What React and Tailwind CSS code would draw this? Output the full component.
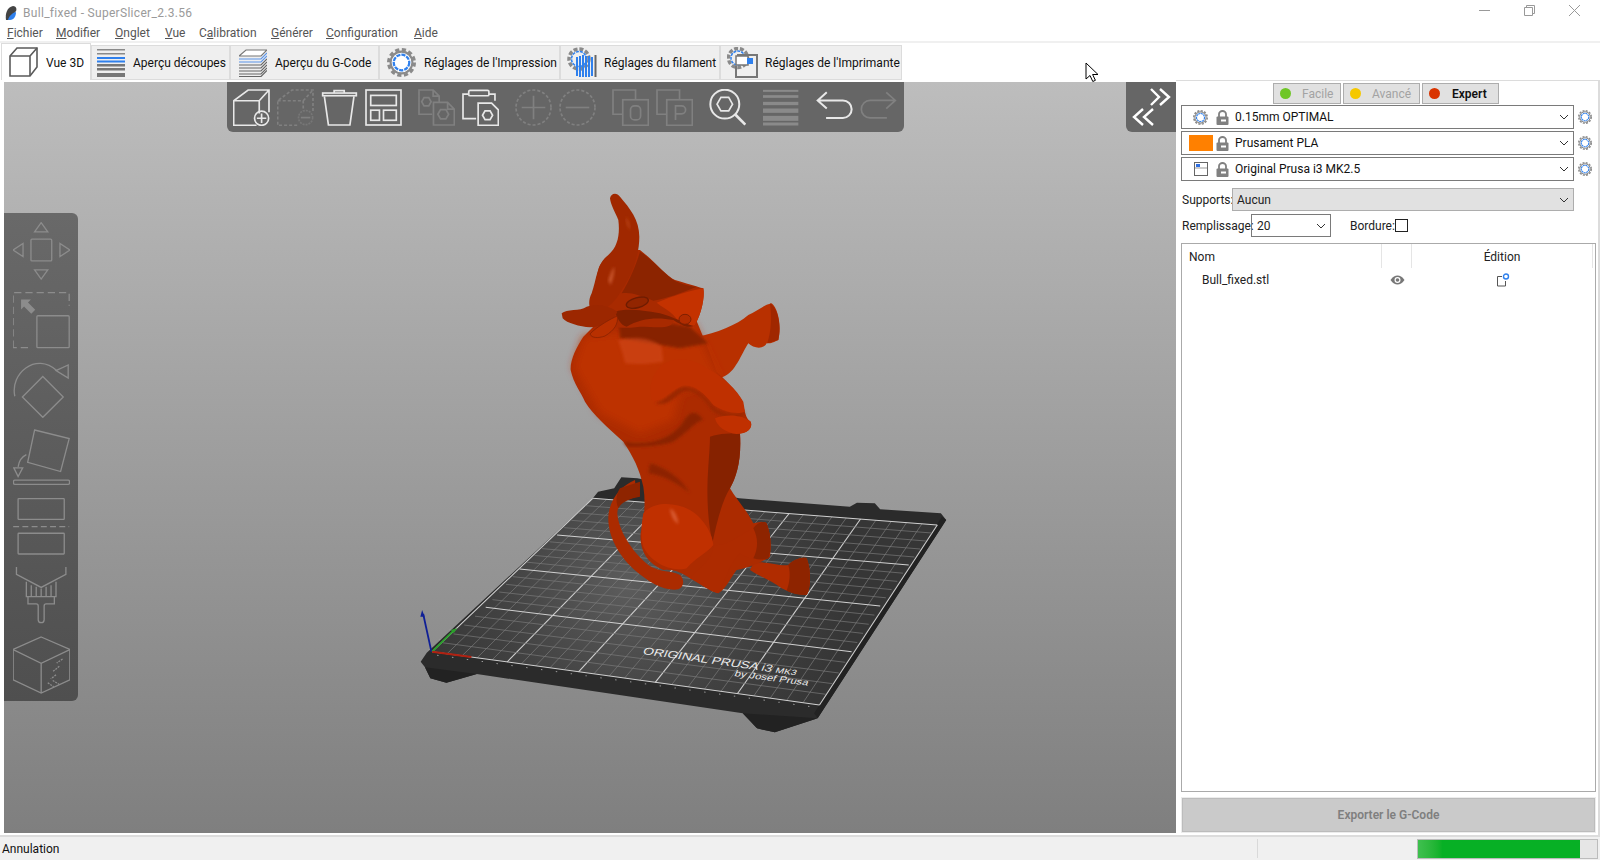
import React from "react";

const tabs = [
  { label: "Vue 3D", w: "w-[90px] h-[37px] bg-white border-b-0", pad: "pl-[7px]", gap: "gap-[8px]", icon: "cube", iw: "w-[29px]" },
  { label: "Aperçu découpes", w: "w-[139px] h-[35px] bg-[#efefef]", pad: "pl-[5px]", gap: "gap-[8px]", icon: "slices", iw: "w-[28px]" },
  { label: "Aperçu du G-Code", w: "w-[149px] h-[35px] bg-[#efefef]", pad: "pl-[8px]", gap: "gap-[8px]", icon: "gcode", iw: "w-[28px]" },
  { label: "Réglages de l'Impression", w: "w-[181px] h-[35px] bg-[#efefef]", pad: "pl-[7px]", gap: "gap-[8px]", icon: "gear", iw: "w-[29px]" },
  { label: "Réglages du filament", w: "w-[160px] h-[35px] bg-[#efefef]", pad: "pl-[6px]", gap: "gap-[7px]", icon: "filament", iw: "w-[30px]" },
  { label: "Réglages de l'Imprimante", w: "w-[182px] h-[35px] bg-[#efefef]", pad: "pl-[6px]", gap: "gap-[7px]", icon: "printer", iw: "w-[31px]" },
];

const menus = [
  ["", "F", "ichier", "w-[49px]"],
  ["", "M", "odifier", "w-[59px]"],
  ["", "O", "nglet", "w-[50px]"],
  ["", "V", "ue", "w-[34px]"],
  ["C", "a", "libration", "w-[72px]"],
  ["", "G", "énérer", "w-[55px]"],
  ["", "C", "onfiguration", "w-[88px]"],
  ["", "A", "ide", "w-[40px]"],
];

function Cog({ size = 16 }) {
  return (
    <svg width={size} height={size} viewBox="0 0 28 28" fill="none">
      <circle cx="14" cy="14" r="12.5" stroke="#8a8a8a" strokeWidth="3" strokeDasharray="4 2.54" />
      <circle cx="14" cy="14" r="10.5" fill="#fff" stroke="#8a8a8a" strokeWidth="2" />
      <circle cx="14" cy="14" r="7.5" stroke="#2f80ed" strokeWidth="2.2" strokeDasharray="4 1" />
    </svg>
  );
}

function Lock() {
  return (
    <svg width="13" height="15" viewBox="0 0 13 15">
      <path d="M3 7V4a3.5 3 0 0 1 7 0v3" fill="none" stroke="#808080" strokeWidth="1.8" />
      <rect x="0.5" y="6.5" width="12" height="8.5" rx="1" fill="#808080" />
      <rect x="5" y="9.5" width="5" height="2" fill="#fff" />
    </svg>
  );
}

function Chevron() {
  return (
    <svg width="10" height="6" viewBox="0 0 10 6" fill="none" className="absolute right-[4px] top-1/2 -translate-y-1/2">
      <path d="M1 1l4 4 4-4" stroke="#333" strokeWidth="1" />
    </svg>
  );
}

function TabIcon({ name }) {
  if (name === "cube")
    return (
      <svg width="29" height="30" viewBox="0 0 29 30" fill="none" stroke="#5a5a5a" strokeWidth="1.6">
        <path d="M1 9l7-8h20v19l-7 9H1z" />
        <path d="M1 9h20v20M21 9l7-8" />
      </svg>
    );
  if (name === "slices")
    return (
      <svg width="28" height="28" viewBox="0 0 28 28">
        <rect y="0" width="28" height="1.5" fill="#8a8a8a" />
        <rect y="4" width="28" height="1.5" fill="#8a8a8a" />
        <rect y="8" width="28" height="2" fill="#2f80ed" />
        <rect y="11.5" width="28" height="2" fill="#2f80ed" />
        <rect y="15" width="28" height="2.5" fill="#777" />
        <rect y="19" width="28" height="2.5" fill="#777" />
        <rect y="24" width="28" height="4" fill="#777" />
      </svg>
    );
  if (name === "gcode")
    return (
      <svg width="28" height="28" viewBox="0 0 28 28" fill="none" strokeWidth="1.2">
        <path d="M0 7l7-6h21l-6 6z" stroke="#777" fill="#fff" />
        <path d="M0 10h22l6-6M0 13h22l6-6" stroke="#5b94e8" />
        <path d="M0 16h22l6-6M0 19h22l6-6M0 22h22l6-6M0 25h22l6-6M0 27.5h22l6-6" stroke="#666" />
      </svg>
    );
  if (name === "gear") return <Cog size={29} />;
  if (name === "filament")
    return (
      <svg width="30" height="31" viewBox="0 0 30 31" fill="none">
        <circle cx="12" cy="12" r="10" stroke="#8a8a8a" strokeWidth="3.5" strokeDasharray="4 1.9" />
        <circle cx="12" cy="12" r="7.5" stroke="#2f80ed" strokeWidth="1.5" strokeDasharray="3 1" />
        <path d="M10 10v19M13 9v21M16 8v22M19 9v21M22 9v21M25 10v19" stroke="#2f80ed" strokeWidth="2" />
        <path d="M28.5 8v22" stroke="#666" strokeWidth="2" />
      </svg>
    );
  return (
    <svg width="31" height="31" viewBox="0 0 31 31" fill="none">
      <circle cx="11" cy="11" r="9.5" stroke="#8a8a8a" strokeWidth="3.5" strokeDasharray="4 1.8" />
      <circle cx="11" cy="11" r="7" stroke="#2f80ed" strokeWidth="1.5" strokeDasharray="3 1" />
      <path d="M10 8h20v22H9V19" stroke="#777" strokeWidth="2" />
      <rect x="9" y="9" width="12" height="9" stroke="#777" strokeWidth="1.5" fill="#fff" />
      <rect x="20" y="11" width="6" height="6" fill="#2f80ed" />
    </svg>
  );
}

// top toolbar, drawn on a 110 unit box (3x the pixels of the reference)
function ToolIcon({ children, off }) {
  return (
    <svg
      viewBox="0 0 110 110"
      fill="none"
      className="w-[37px] h-[37px] shrink-0"
      stroke={off ? "#808080" : "#e8e8e8"}
      strokeWidth="5"
    >
      {children}
    </svg>
  );
}

function Hex({ x, y, r = 15 }) {
  const h = r * 0.87;
  return (
    <path d={`M${x - r} ${y}L${x - r / 2} ${y - h}H${x + r / 2}L${x + r} ${y}L${x + r / 2} ${y + h}H${x - r / 2}Z`} />
  );
}

function TopToolbar() {
  return (
    <div className="absolute left-[223px] top-0 h-[50px] w-[677px] bg-[#666666] rounded-b-[6px] flex items-center pl-[6px] pt-[1px]">
      <div className="flex gap-[7px]">
        <ToolIcon>
          <path d="M70 108H2V35L45 3h62v66M2 35h76v38M78 35L107 3" />
          <circle cx="85" cy="87" r="21" />
          <path d="M85 73v28M71 87h28" />
        </ToolIcon>
        <ToolIcon off>
          <path d="M60 108H2V35L45 3h62v66M2 35h76v30M78 35L107 3" strokeDasharray="9 6" />
          <circle cx="85" cy="85" r="21" stroke="#777" strokeDasharray="6 3" />
          <path d="M71 85h28" />
        </ToolIcon>
        <ToolIcon>
          <rect x="5" y="12" width="100" height="8" />
          <path d="M39 12V5h30v7M10 22l12 85h64l12-85" />
        </ToolIcon>
        <ToolIcon>
          <rect x="3" y="3" width="104" height="104" />
          <rect x="17" y="19" width="76" height="30" />
          <rect x="17" y="63" width="26" height="30" />
          <rect x="55" y="63" width="38" height="30" />
        </ToolIcon>
      </div>
      <div className="flex gap-[7px] ml-[16px]">
        <ToolIcon off>
          <path d="M42 75H3V3h42l18 18v20M45 3v18h18" />
          <path d="M46 40h42l20 20v47H46zM88 40v20h20" />
          <Hex x={75} y={75} r={16} />
          <Hex x={25} y={38} r={14} />
        </ToolIcon>
        <ToolIcon>
          <path d="M42 88H3V15h18M80 15h18v20" />
          <rect x="20" y="4" width="60" height="16" rx="4" />
          <path d="M48 42h40l20 20v46H48z" />
          <Hex x={76} y={78} r={15} />
        </ToolIcon>
      </div>
      <div className="flex gap-[7px] ml-[16px]">
        <ToolIcon off>
          <circle cx="55" cy="55" r="52" strokeDasharray="9 6" />
          <path d="M55 20v70M20 55h70" />
        </ToolIcon>
        <ToolIcon off>
          <circle cx="55" cy="55" r="52" strokeDasharray="9 6" />
          <path d="M20 55h70" />
        </ToolIcon>
      </div>
      <div className="flex gap-[7px] ml-[16px]">
        <ToolIcon off>
          <path d="M70 30V3H3v72h27" />
          <rect x="32" y="32" width="76" height="76" />
          <rect x="55" y="50" width="30" height="42" rx="12" />
        </ToolIcon>
        <ToolIcon off>
          <path d="M70 30V3H3v72h27" />
          <rect x="32" y="32" width="76" height="76" />
          <path d="M58 92V50h18a11 11 0 0 1 0 24H58" />
        </ToolIcon>
      </div>
      <div className="flex ml-[16px]">
        <ToolIcon>
          <circle cx="47" cy="45" r="43" strokeWidth="6" />
          <Hex x={47} y={45} r={23} />
          <path d="M78 76l30 30" strokeWidth="8" />
        </ToolIcon>
      </div>
      <div className="flex ml-[17px]">
        <svg viewBox="0 0 108 110" className="w-[36px] h-[37px] shrink-0" fill="#8a8a8a">
          <rect y="2" width="106" height="6" />
          <rect y="18" width="106" height="8" />
          <rect y="38" width="106" height="10" />
          <rect y="58" width="106" height="13" />
          <rect y="80" width="106" height="15" />
          <rect y="100" width="106" height="9" />
        </svg>
      </div>
      <div className="flex gap-[7px] ml-[17px]">
        <ToolIcon>
          <path d="M32 10L5 34l27 24M5 34h75a26 26 0 0 1 0 52H30" strokeWidth="6" />
        </ToolIcon>
        <ToolIcon off>
          <path d="M78 10l27 24-27 24M105 34H30a26 26 0 0 0 0 52h50" />
        </ToolIcon>
      </div>
    </div>
  );
}

function SideIcon({ children }) {
  return (
    <svg viewBox="0 0 172 176" fill="none" stroke="#8c8c8c" strokeWidth="4" className="w-[57px] h-[58px] shrink-0">
      {children}
    </svg>
  );
}

function LeftToolbar() {
  return (
    <div className="absolute left-0 top-[131px] w-[74px] h-[488px] rounded-r-[6px] bg-gradient-to-b from-[#696969] to-[#4f4f4f] flex flex-col items-center gap-[11px] pt-[9px]">
      <SideIcon>
        <path d="M85 2L65 30h40zM0 85l30-20v40zM172 85l-30-20v40zM65 145h40l-20 28z" />
        <rect x="54" y="52" width="63" height="66" rx="3" />
      </SideIcon>
      <SideIcon>
        <path d="M0 172V5h170v40M45 172H0" strokeDasharray="22 12" />
        <rect x="72" y="75" width="98" height="97" rx="3" />
        <path d="M24 26h30l-9 9 22 22-12 12-22-22-9 9z" fill="#8c8c8c" stroke="none" />
      </SideIcon>
      <SideIcon>
        <path d="M5 110C-10 40 70 -25 132 32" />
        <path d="M130 32l37-17v40z" />
        <path d="M90 50l62 62-62 62-62-62z" />
      </SideIcon>
      <SideIcon>
        <path d="M65 3l105 26-26 100-100-28z" />
        <path d="M40 78C25 85 18 95 15 115" />
        <path d="M2 118h27l-14 26z" />
        <rect x="1" y="155" width="170" height="13" rx="4" />
      </SideIcon>
      <SideIcon>
        <rect x="15" y="2" width="140" height="63" rx="2" />
        <path d="M0 87h170" strokeDasharray="18 10" />
        <rect x="15" y="107" width="140" height="63" rx="2" />
      </SideIcon>
      <SideIcon>
        <path d="M10 0v22l75 40 75-40V0" />
        <path d="M40 45v45h90V45M55 55v35M70 60v30M85 65v25M100 60v30M115 55v35" />
        <path d="M45 90v22h25q6 0 6 6v42a9 9 0 0 0 18 0v-42q0-6 6-6h25V90" />
      </SideIcon>
      <SideIcon>
        <path d="M85 3l87 38v92l-87 40-85-40V41z" />
        <path d="M0 41l85 42 87-42M85 83v90" />
        <path d="M150 70l-18 12M140 92l-20 16M130 118l-16 12M105 142l18 12M120 135l20 12" strokeDasharray="6 3" />
      </SideIcon>
    </div>
  );
}

// bed traced on a crop of the reference: x is 2.8x, y is 3x, origin 400,470
const xFront = [90, 300, 500, 715, 945, 1175];
const xBack = [540, 735, 920, 1090, 1290, 1505];
const leftEdge = [[90, 545], [240, 412], [335, 297], [440, 195], [540, 85]];
const rightEdge = [[1175, 705], [1265, 545], [1345, 408], [1425, 285], [1505, 165]];

const lerp = (a, b, t) => a + (b - a) * t;
const onFront = (x) => [x, lerp(545, 705, (x - 90) / 1085)];
const onBack = (x) => [x, lerp(85, 165, (x - 540) / 965)];

function Grid() {
  const lines = [];
  for (let i = 0; i < 5; i++) {
    for (let k = 0; k < 5; k++) {
      const t = k / 5;
      const a = onFront(lerp(xFront[i], xFront[i + 1], t));
      const b = onBack(lerp(xBack[i], xBack[i + 1], t));
      lines.push([a, b, k === 0]);
    }
  }
  lines.push([onFront(1175), onBack(1505), true]);
  for (let i = 0; i < 4; i++) {
    for (let k = 0; k < 5; k++) {
      const t = k / 5;
      const a = [lerp(leftEdge[i][0], leftEdge[i + 1][0], t), lerp(leftEdge[i][1], leftEdge[i + 1][1], t)];
      const b = [lerp(rightEdge[i][0], rightEdge[i + 1][0], t), lerp(rightEdge[i][1], rightEdge[i + 1][1], t)];
      lines.push([a, b, k === 0]);
    }
  }
  lines.push([leftEdge[4], rightEdge[4], true]);
  return (
    <g>
      {lines.map((l, i) => (
        <line
          key={i}
          x1={l[0][0]}
          y1={l[0][1]}
          x2={l[1][0]}
          y2={l[1][1]}
          stroke={l[2] ? "#d0d0d0" : "#7a7a7a"}
          strokeWidth={l[2] ? 3 : 2}
        />
      ))}
    </g>
  );
}

function Scene() {
  return (
    <svg viewBox="4 82 1172 751" className="absolute inset-0 w-[1172px] h-[751px]">
      <defs>
        <radialGradient id="plate" gradientUnits="userSpaceOnUse" cx="640" cy="350" r="620">
          <stop offset="0" stopColor="#5c5c5c" />
          <stop offset="0.6" stopColor="#414141" />
          <stop offset="1" stopColor="#363636" />
        </radialGradient>
        <filter id="soft" x="-20%" y="-20%" width="140%" height="140%">
          <feGaussianBlur stdDeviation="5" />
        </filter>
        <filter id="softer" x="-20%" y="-20%" width="140%" height="140%">
          <feGaussianBlur stdDeviation="12" />
        </filter>
      </defs>
      <g transform="translate(400 470) scale(0.357 0.3333)">
        <path
          d="M58 575L75 548L540 85L555 65L600 55L620 22L665 25L950 85L1260 110L1280 98L1330 100L1345 118L1515 130L1530 150L1170 745L1050 787L1000 775L960 730L215 612L130 638L85 625L70 592Z"
          fill="#2b2b2b"
        />
        <path d="M70 592L215 612L130 638L85 625ZM960 730L1170 745L1050 787L1000 775ZM1170 745L1530 150L1518 140L1160 730Z" fill="#222" />
        <path d="M90 545L540 85L1505 165L1175 705Z" fill="url(#plate)" />
        <Grid />
        <path d="M104 556L1165 712M80 540L530 80" stroke="#9a9a9a" strokeWidth="3" strokeDasharray="4 38" fill="none" />
        <text
          transform="translate(678 552) rotate(8.5) skewX(-14)"
          fontFamily="Liberation Sans, sans-serif"
          fontSize="31"
          fill="#ececec"
          textLength="435"
          lengthAdjust="spacingAndGlyphs"
        >
          ORIGINAL PRUSA i3 <tspan fontSize="23">MK3</tspan>
        </text>
        <text
          transform="translate(935 618) rotate(8) skewX(-14)"
          fontFamily="Liberation Sans, sans-serif"
          fontSize="26"
          fill="#ececec"
          textLength="208"
          lengthAdjust="spacingAndGlyphs"
        >
          by Josef Prusa
        </text>
        <path d="M88 545L65 432" stroke="#0f1f96" strokeWidth="5" />
        <path d="M62 420l-5 20h12z" fill="#0f1f96" />
        <path d="M90 545L150 482" stroke="#2aa02a" strokeWidth="5" />
        <path d="M160 475l-18 5 9 9z" fill="#2aa02a" />
        <path d="M90 545L200 561" stroke="#b02010" strokeWidth="6" />
      </g>
      <g transform="translate(540 180) scale(0.3333)">
        {/* tail */}
        <path d="M285 900C250 915 215 945 206 1000C198 1060 235 1130 290 1175C325 1205 375 1235 415 1228C435 1220 432 1195 420 1185C395 1170 360 1180 325 1155C275 1115 235 1050 232 1000C232 975 250 960 290 950Z" fill="#ab2b00" />
        <path d="M240 925C265 915 285 910 300 905L300 950C270 955 245 965 235 985C225 960 230 940 240 925Z" fill="#8e2400" />
        {/* far arm */}
        <path d="M470 470C530 460 590 435 625 405C650 395 670 375 695 370C715 385 725 440 715 480C695 490 690 490 680 490C670 510 640 505 625 490C605 520 585 580 550 590L500 620Z" fill="#b83000" />
        <path d="M690 370C715 385 725 440 715 480L682 490C695 450 695 410 690 370Z" fill="#a02700" />
        {/* far leg */}
        <path d="M640 1150C670 1140 720 1160 745 1155C760 1140 785 1130 800 1135C815 1170 812 1230 800 1245C770 1245 745 1235 725 1225C690 1200 660 1190 630 1170Z" fill="#b02c00" />
        <path d="M745 1155C760 1140 785 1130 800 1135C815 1170 812 1230 800 1245C775 1245 755 1240 740 1232C750 1205 752 1180 745 1155Z" fill="#8e2400" />
        {/* body */}
        <path d="M130 470C110 500 90 540 92 570C100 610 125 640 135 665C160 705 200 740 250 785C280 830 300 870 310 920C318 970 312 1020 302 1060C298 1110 320 1150 370 1170C400 1165 430 1180 450 1195C480 1210 510 1235 535 1240C560 1225 570 1195 590 1170C620 1165 660 1150 690 1130C695 1090 685 1040 665 1025L640 1030C620 990 590 960 570 925C590 890 605 840 600 760C620 760 640 745 632 725C615 715 615 690 605 660C585 625 555 600 530 575C510 520 490 470 460 400L200 400Z" fill="#ac2b00" />
        {/* chest stays brighter than the belly */}
        <path d="M130 470L460 430L540 600L420 640L400 720L300 760L180 700L100 560Z" fill="#bd3000" filter="url(#softer)" />
        <path d="M235 405L450 440L505 490L420 505L240 475Z" fill="#872200" filter="url(#soft)" />
        <path d="M510 770C540 760 575 760 600 760C605 840 590 890 570 925C545 965 530 1030 518 1085C505 1040 498 950 505 860C508 820 510 790 510 770Z" fill="#862200" />
        <path d="M250 785C340 800 400 770 430 725C450 690 470 690 490 720C470 720 440 760 400 785C350 800 300 800 262 800Z" fill="#8a2300" filter="url(#soft)" />
        <path d="M330 850C370 860 420 890 450 940C420 915 370 885 325 880Z" fill="#8d2400" filter="url(#soft)" />
        <path d="M235 480C280 470 330 470 365 500L370 545C340 550 290 555 255 550C250 520 240 500 235 480Z" fill="#d2481c" opacity="0.6" filter="url(#soft)" />
        <path d="M345 670C380 660 400 630 425 622C450 612 490 640 520 680C545 700 590 712 615 695L612 705C580 720 540 712 515 690C490 650 455 625 430 635C405 648 385 680 345 670Z" fill="#992700" filter="url(#soft)" />
        <path d="M360 560C400 530 450 530 500 565C550 590 590 630 610 665L615 695C590 705 550 695 520 675C490 635 450 605 420 620C390 635 360 670 335 660C325 620 335 590 360 560Z" fill="#bf3000" />
        <path d="M525 715C560 700 610 705 632 725C640 745 620 762 590 762C560 760 530 740 525 715Z" fill="#c03000" />
        <path d="M310 1000C340 965 400 965 450 990C500 1020 520 1075 520 1095C500 1120 470 1130 440 1165C410 1175 340 1160 310 1100C300 1070 305 1030 310 1000Z" fill="#c03000" />
        <path d="M390 985q22 12 25 48q-22-15-25-48z" fill="#d85a30" filter="url(#soft)" />
        <path d="M450 1195C480 1160 520 1140 520 1095C560 1100 590 1070 630 1050C650 1030 670 1020 680 1030C695 1070 695 1110 685 1135C650 1145 620 1135 600 1120C570 1150 560 1190 535 1240C510 1235 480 1210 450 1195Z" fill="#ad2b00" />
        <path d="M640 1045C650 1030 670 1020 680 1030C695 1070 695 1110 685 1135C670 1140 655 1140 640 1135C655 1105 655 1075 640 1045Z" fill="#8e2400" />
        {/* head */}
        <path d="M175 270C180 240 220 215 240 210L300 210C340 240 380 290 405 300C440 310 470 320 490 325C495 350 485 400 465 435C440 445 425 435 400 420C400 450 350 440 300 440C220 450 180 440 165 400C155 360 165 310 175 270Z" fill="#a82a00" />
        <path d="M245 340C270 300 290 250 300 215C340 240 385 295 410 305C435 315 455 320 470 320C420 340 380 355 340 362C300 345 270 335 245 340Z" fill="#8c2400" />
        <path d="M350 368C400 348 450 332 490 325C495 350 485 400 465 435C440 445 420 430 400 405C385 390 365 380 350 368Z" fill="#c43200" />
        <path d="M225 395C260 385 300 390 360 400C400 410 430 430 460 438C440 445 425 435 400 420C350 410 300 415 260 440C240 435 230 410 225 395Z" fill="#7d2000" />
        <ellipse cx="292" cy="368" rx="34" ry="15" transform="rotate(-15 292 368)" fill="#922500" stroke="#6e1c00" strokeWidth="4" />
        <ellipse cx="435" cy="418" rx="18" ry="15" fill="#b02c00" stroke="#7d2000" strokeWidth="3" />
        {/* horns */}
        <path d="M210 55C212 40 230 35 240 50C270 85 298 120 298 170C298 220 280 280 245 330C225 370 190 395 165 400C150 395 140 370 155 340C170 300 170 250 205 225C235 200 240 160 235 120C225 95 212 75 210 55Z" fill="#a02800" />
        <path d="M205 300q10-30 18-40q0 30-12 55z" fill="#c8552c" filter="url(#soft)" />
        <path d="M258 110q10 15 12 40q-10-15-12-40z" fill="#c0481f" filter="url(#soft)" />
        <path d="M65 400C80 385 120 395 140 380C170 370 205 375 232 395C225 420 190 440 150 442C120 440 80 430 68 415Z" fill="#9c2700" />
        <path d="M150 462C170 440 215 415 232 408C235 430 225 450 195 468C175 475 155 475 150 462Z" fill="#b83000" stroke="#7d2000" strokeWidth="2" />
      </g>
    </svg>
  );
}

function Combo({ lead, text }) {
  return (
    <div className="flex items-center gap-[4px]">
      <div className="relative w-[393px] h-[24px] border border-[#7a7a7a] flex items-center shrink-0">
        <div className="w-[27px] ml-[5px] flex justify-center">{lead}</div>
        <div className="ml-[2px] flex items-center">
          <Lock />
        </div>
        <span className="ml-[6px] text-[#111]">{text}</span>
        <Chevron />
      </div>
      <Cog size={14} />
    </div>
  );
}

function ModeBtn({ color, label, w, on }) {
  return (
    <div className={`${w} h-[21px] bg-[#e1e1e1] border border-[#adadad] flex items-center pl-[6px]`}>
      <span className={`w-[11px] h-[11px] rounded-full ${color}`} />
      <span className={on ? "ml-[12px] text-[#111] font-semibold" : "ml-[11px] text-[#a3a3a3]"}>{label}</span>
    </div>
  );
}

export default function App() {
  return (
    <div className="relative w-[1600px] h-[860px] overflow-hidden bg-white flex flex-col text-[12px] leading-none text-[#222] font-['Roboto',sans-serif]">
      {/* title bar */}
      <div className="h-[26px] flex items-center pl-[4px] shrink-0">
        <svg width="13" height="15" viewBox="0 0 13 15" className="shrink-0">
          <path d="M2 14C1 8 3 1 9 0c3 0 4 3 3 5L5 14z" fill="#444" />
          <path d="M4 14c1-4 4-7 8-8 0 4-2 8-6 8z" fill="#2f80ed" />
        </svg>
        <span className="ml-[6px] text-[#9a9a9a] tracking-[0.3px]">Bull_fixed - SuperSlicer_2.3.56</span>
        <div className="ml-auto flex items-center mr-[20px] gap-[34px] -mt-[6px]">
          <svg width="11" height="11" viewBox="0 0 11 11"><path d="M0 5.5h11" stroke="#999" /></svg>
          <svg width="11" height="11" viewBox="0 0 11 11" fill="none" stroke="#999"><path d="M0.5 2.5h8v8h-8zM2.5 2.5v-2h8v8h-2" /></svg>
          <svg width="11" height="11" viewBox="0 0 11 11" stroke="#999"><path d="M0 0l11 11M11 0L0 11" /></svg>
        </div>
      </div>

      {/* menu */}
      <div className="h-[17px] shrink-0 flex pl-[7px] pt-[1px] border-b-2 border-[#f0f0f0] text-[#555]">
        {menus.map((m) => (
          <span key={m[2]} className={m[3]}>
            {m[0]}
            <span className="underline">{m[1]}</span>
            {m[2]}
          </span>
        ))}
      </div>

      {/* tabs */}
      <div className="h-[37px] shrink-0 flex items-end pl-[1px]">
        {tabs.map((t) => (
          <div key={t.label} className={`${t.w} ${t.pad} ${t.gap} border border-[#dcdcdc] flex items-center shrink-0`}>
            <div className={`${t.iw} flex justify-center shrink-0`}>
              <TabIcon name={t.icon} />
            </div>
            <span className="text-[#111] whitespace-nowrap pt-[1px]">{t.label}</span>
          </div>
        ))}
      </div>

      {/* main */}
      <div className="h-[755px] shrink-0 flex">
        <div className="relative w-[1172px] ml-[4px] mt-[2px] mb-[2px] overflow-hidden bg-gradient-to-b from-[#bdbdbd] to-[#7f7f7f]">
          <Scene />
          <TopToolbar />
          <LeftToolbar />
          <div className="absolute right-0 top-0 w-[50px] h-[50px] bg-[#666666] rounded-bl-[6px]">
            <svg viewBox="0 0 50 50" fill="none" stroke="#fff" strokeWidth="2.4" className="w-[50px] h-[50px]">
              <path d="M25 7l8 8-8 8M34 7l9 8-9 8M17 27l-9 8 9 8M27 27l-9 8 9 8" />
            </svg>
          </div>
        </div>

        <div className="w-[424px] border-t border-r-2 border-[#dcdcdc] pl-[5px] flex flex-col">
          <div className="flex gap-[2px] ml-[92px] mt-[2px]">
            <ModeBtn w="w-[68px]" color="bg-[#6fc626]" label="Facile" />
            <ModeBtn w="w-[77px]" color="bg-[#f5c800]" label="Avancé" />
            <ModeBtn w="w-[77px]" color="bg-[#d93400]" label="Expert" on />
          </div>
          <div className="flex flex-col gap-[2px] mt-[1px]">
            <Combo lead={<Cog size={15} />} text="0.15mm OPTIMAL" />
            <Combo lead={<span className="block w-[24px] h-[16px] bg-[#ff8000]" />} text="Prusament PLA" />
            <Combo
              lead={
                <svg width="14" height="14" viewBox="0 0 14 14" fill="none">
                  <rect x="0.5" y="0.5" width="13" height="13" stroke="#666" />
                  <path d="M1 6h12" stroke="#999" />
                  <rect x="2" y="2" width="4" height="3" fill="#2f6fe0" />
                </svg>
              }
              text="Original Prusa i3 MK2.5"
            />
          </div>
          <div className="flex items-center mt-[7px] h-[23px] pl-[1px]">
            <span className="w-[50px] text-[#222]">Supports:</span>
            <div className="relative w-[342px] h-[23px] bg-[#e1e1e1] border border-[#adadad] flex items-center pl-[4px]">
              Aucun
              <Chevron />
            </div>
          </div>
          <div className="flex items-center mt-[3px] h-[23px] pl-[1px]">
            <span className="w-[69px]">Remplissage:</span>
            <div className="relative w-[80px] h-[23px] border border-[#7a7a7a] flex items-center pl-[5px]">
              20
              <Chevron />
            </div>
            <span className="ml-[19px] w-[45px]">Bordure:</span>
            <span className="w-[13px] h-[13px] border border-[#222]" />
          </div>
          <div className="mt-[6px] h-[549px] w-[415px] border border-[#aaaaaa] flex flex-col">
            <div className="flex h-[24px] items-center text-[#222]">
              <span className="w-[200px] pl-[7px] pt-[1px] h-full flex items-center border-r border-[#e5e5e5]">Nom</span>
              <span className="w-[30px] h-full border-r border-[#e5e5e5]" />
              <span className="w-[181px] pt-[1px] h-full flex items-center justify-center border-r border-[#e5e5e5]">Édition</span>
            </div>
            <div className="flex h-[24px] items-center">
              <span className="w-[200px] pl-[20px]">Bull_fixed.stl</span>
              <span className="w-[30px] flex justify-center">
                <svg width="15" height="10" viewBox="0 0 15 10">
                  <path d="M0.5 5C3 1.5 5 0.5 7.5 0.5S12 1.5 14.5 5C12 8.5 10 9.5 7.5 9.5S3 8.5 0.5 5z" fill="#777" />
                  <circle cx="7.5" cy="5" r="3" fill="#fff" />
                  <circle cx="7.5" cy="5" r="1.8" fill="#777" />
                </svg>
              </span>
              <span className="w-[181px] flex justify-center">
                <svg width="14" height="14" viewBox="0 0 14 14" fill="none">
                  <path d="M6 3.5H1.5v9.5h8V8" stroke="#555" />
                  <circle cx="10" cy="3.5" r="2.5" stroke="#2f80ed" strokeWidth="1.4" />
                </svg>
              </span>
            </div>
          </div>
          <div className="mt-[5px] w-[415px] h-[36px] border border-[#ececec] flex">
            <div className="flex-1 bg-[#cacaca] border border-[#bcbcbc] flex items-center justify-center text-[#7f7f7f] font-semibold">
              Exporter le G-Code
            </div>
          </div>
        </div>
      </div>

      {/* status bar */}
      <div className="h-[25px] shrink-0 bg-[#f0f0f0] border-t-2 border-[#dcdcdc] flex items-center pl-[2px]">
        <span className="w-[1255px] text-[#111] pt-[1px]">Annulation</span>
        <span className="w-px h-[19px] bg-[#d9d9d9]" />
        <div className="ml-[159px] w-[181px] h-[20px] bg-[#e6e6e6] border border-[#bcbcbc] mr-[2px]">
          <div className="h-full w-[162px] bg-gradient-to-r from-[#3fc04f] via-[#07b025] via-[15%] to-[#07b025]" />
        </div>
      </div>

      {/* mouse pointer */}
      <svg width="14" height="21" viewBox="0 0 14 21" className="absolute left-[1085px] top-[62px]">
        <path d="M1 1v16l4-3.5 2.8 6 2.6-1.2-2.8-5.8H13z" fill="#fff" stroke="#000" strokeWidth="1" />
      </svg>
    </div>
  );
}
